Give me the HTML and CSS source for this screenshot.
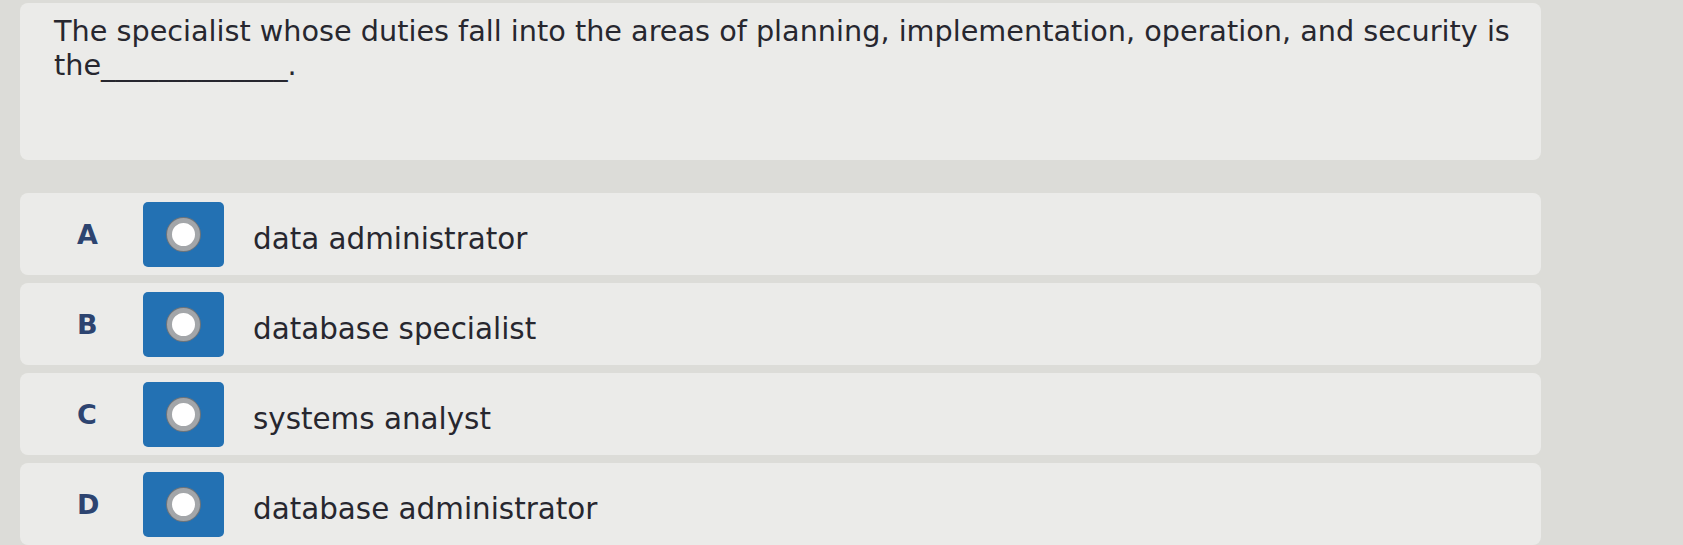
FILE: index.html
```html
<!DOCTYPE html>
<html lang="en">
<head>
<meta charset="utf-8">
<title>Question</title>
<link rel="stylesheet" href="styles.css">
</head>
<body>
<main class="page">
  <section class="question">
    <p class="prompt">The specialist whose duties fall into the areas of planning, implementation, operation, and security is the_____________.</p>
  </section>
  <ul class="options">
    <li class="option">
      <span class="letter">A</span>
      <span class="radio-box"><span class="radio"></span></span>
      <span class="label">data administrator</span>
    </li>
    <li class="option">
      <span class="letter">B</span>
      <span class="radio-box"><span class="radio"></span></span>
      <span class="label">database specialist</span>
    </li>
    <li class="option">
      <span class="letter">C</span>
      <span class="radio-box"><span class="radio"></span></span>
      <span class="label">systems analyst</span>
    </li>
    <li class="option">
      <span class="letter">D</span>
      <span class="radio-box"><span class="radio"></span></span>
      <span class="label">database administrator</span>
    </li>
  </ul>
</main>
</body>
</html>
```
FILE: styles.css
```css
html, body {
  margin: 0;
  padding: 0;
}
body {
  background: #dcdcd8;
  font-family: "DejaVu Sans", "Noto Sans", sans-serif;
  color: #27272f;
  overflow: hidden;
}
.page {
  padding: 3px 142px 0 20px;
}
.question {
  background: #ebebe9;
  border-radius: 8px;
  height: 157px;
  padding: 11px 20px 0 34px;
  box-sizing: border-box;
}
.prompt {
  margin: 0;
  font-size: 28.7px;
  line-height: 34px;
}
.options {
  list-style: none;
  margin: 33px 0 0 0;
  padding: 0;
  display: flex;
  flex-direction: column;
  gap: 8px;
}
.option {
  height: 82px;
  background: #ebebe9;
  border-radius: 8px;
  display: flex;
  align-items: center;
  padding-left: 57px;
}
.letter {
  width: 66px;
  font-weight: bold;
  font-size: 27px;
  color: #2d4470;
}
.radio-box {
  width: 81px;
  height: 65px;
  background: #2371b3;
  border-radius: 5px;
  display: flex;
  align-items: center;
  justify-content: center;
}
.radio {
  width: 23px;
  height: 23px;
  border-radius: 50%;
  background: #ffffff;
  border: 5px solid #a3a6a9;
  box-shadow: 0 0 0 1px #6f7479;
}
.label {
  margin-left: 29px;
  font-size: 29.4px;
  padding-top: 10px;
}
```
